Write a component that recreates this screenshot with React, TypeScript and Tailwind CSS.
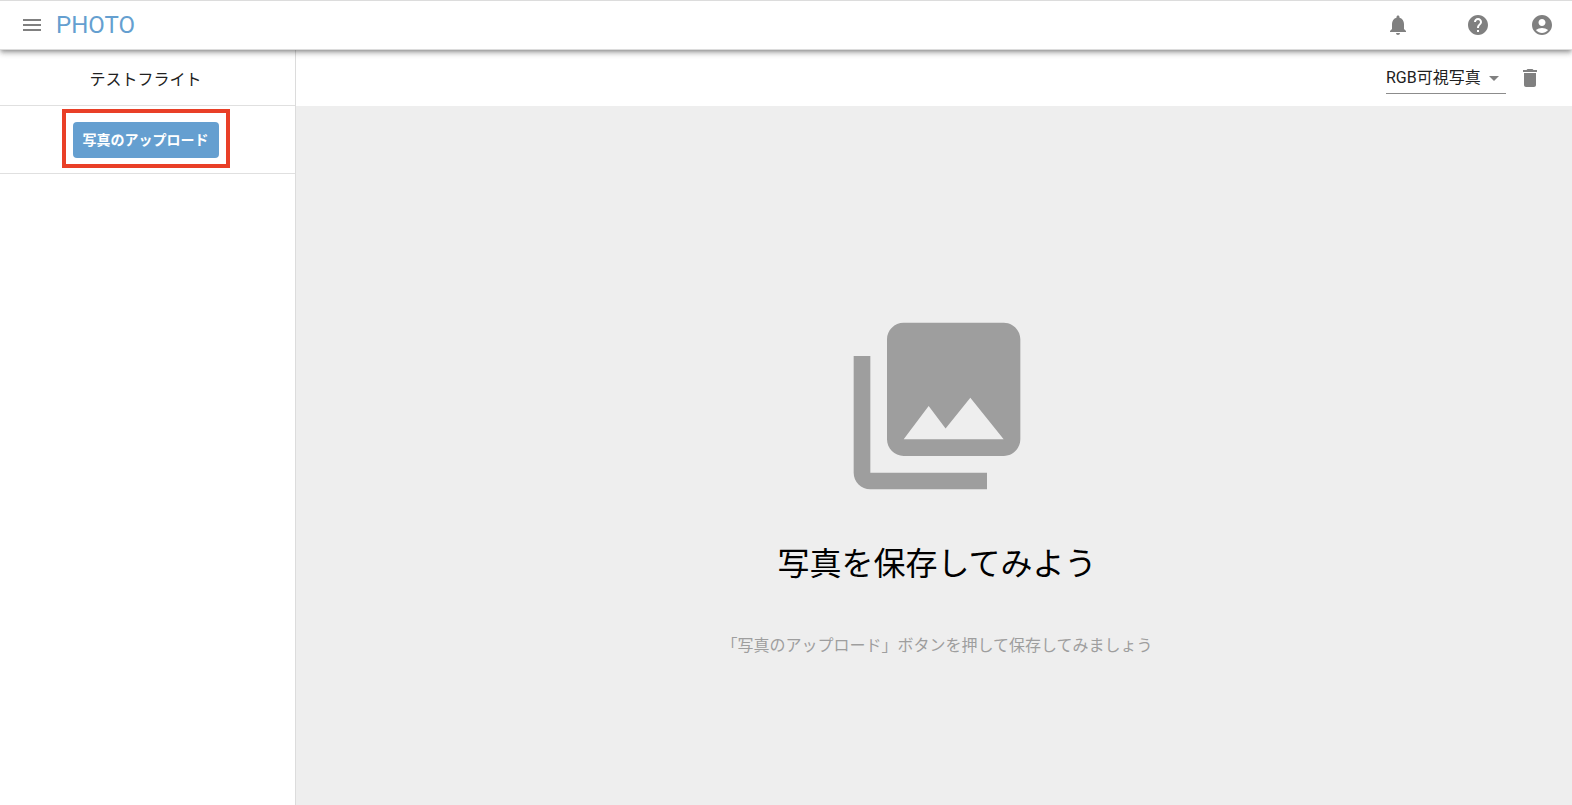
import { useState } from "react"
import {
    MdAccountCircle,
    MdArrowDropDown,
    MdDelete,
    MdHelp,
    MdMenu,
    MdNotifications,
    MdPhotoLibrary,
} from "react-icons/md"

const Header = () => {
    return (
        <header className="relative z-10 flex items-center justify-between h-[50px] pl-5 pr-[18px] bg-white border-y border-[#dcdcdc] shadow-[0_2px_4px_-1px_rgba(0,0,0,0.3),0_4px_5px_0_rgba(0,0,0,0.14),0_1px_8px_0_rgba(0,0,0,0.12)]">
            <div className="flex items-center gap-3">
                <button type="button" aria-label="メニュー" className="text-[#808080]">
                    <MdMenu size={24} />
                </button>
                <h1 className="text-2xl text-[#659fd0]">PHOTO</h1>
            </div>

            <div className="flex items-center text-[#808080]">
                <button type="button" aria-label="お知らせ" className="mr-14">
                    <MdNotifications size={24} />
                </button>
                <button type="button" aria-label="ヘルプ" className="mr-10">
                    <MdHelp size={24} />
                </button>
                <button type="button" aria-label="アカウント">
                    <MdAccountCircle size={24} />
                </button>
            </div>
        </header>
    )
}

const Sidebar = () => {
    return (
        <aside className="shrink-0 w-[296px] border-r border-[#dcdcdc] bg-white">
            <div className="flex items-center justify-center h-14 pt-1 pr-1 border-b border-[#e0e0e0]">
                <h2 className="text-base text-[#212121]">テストフライト</h2>
            </div>

            <div className="flex justify-center pt-[3px] pb-[5px] pr-1 border-b border-[#e0e0e0]">
                {/* Highlight frame around the upload button */}
                <div className="px-[7px] pt-[9px] pb-[6px] border-4 border-[#e93f27]">
                    <button
                        type="button"
                        className="h-9 px-[10px] rounded bg-[#659fd0] text-sm font-bold text-white"
                    >
                        写真のアップロード
                    </button>
                </div>
            </div>
        </aside>
    )
}

const Toolbar = () => {
    const [photoType, setPhotoType] = useState("rgb")

    return (
        <div className="flex items-center justify-end gap-3 h-14 pr-[30px] bg-white">
            <div className="relative w-[120px]">
                <select
                    aria-label="写真の種類"
                    value={photoType}
                    onChange={(e) => setPhotoType(e.target.value)}
                    className="block w-full h-8 appearance-none border-b border-[#8c8c8c] bg-transparent text-base text-[#212121] outline-none"
                >
                    <option value="rgb">RGB可視写真</option>
                </select>
                <MdArrowDropDown
                    size={24}
                    className="absolute right-0 top-1 text-[#808080] pointer-events-none"
                />
            </div>
            <button type="button" aria-label="削除" className="text-[#808080]">
                <MdDelete size={24} />
            </button>
        </div>
    )
}

const EmptyState = () => {
    return (
        <div className="flex flex-col flex-1 items-center pt-[200px] pl-[6px] bg-[#eeeeee]">
            <MdPhotoLibrary size={200} className="text-[#9e9e9e]" />
            <p className="mt-[34px] text-[32px] leading-12 text-black">写真を保存してみよう</p>
            <p className="mt-[46px] text-base text-[#9e9e9e]">
                「写真のアップロード」ボタンを押して保存してみましょう
            </p>
        </div>
    )
}

const App = () => {
    return (
        <div className="flex flex-col min-h-screen bg-white font-[Roboto,'Noto_Sans_CJK_JP',sans-serif]">
            <Header />
            <div className="flex flex-1">
                <Sidebar />
                <main className="flex flex-col flex-1">
                    <Toolbar />
                    <EmptyState />
                </main>
            </div>
        </div>
    )
}

export default App
